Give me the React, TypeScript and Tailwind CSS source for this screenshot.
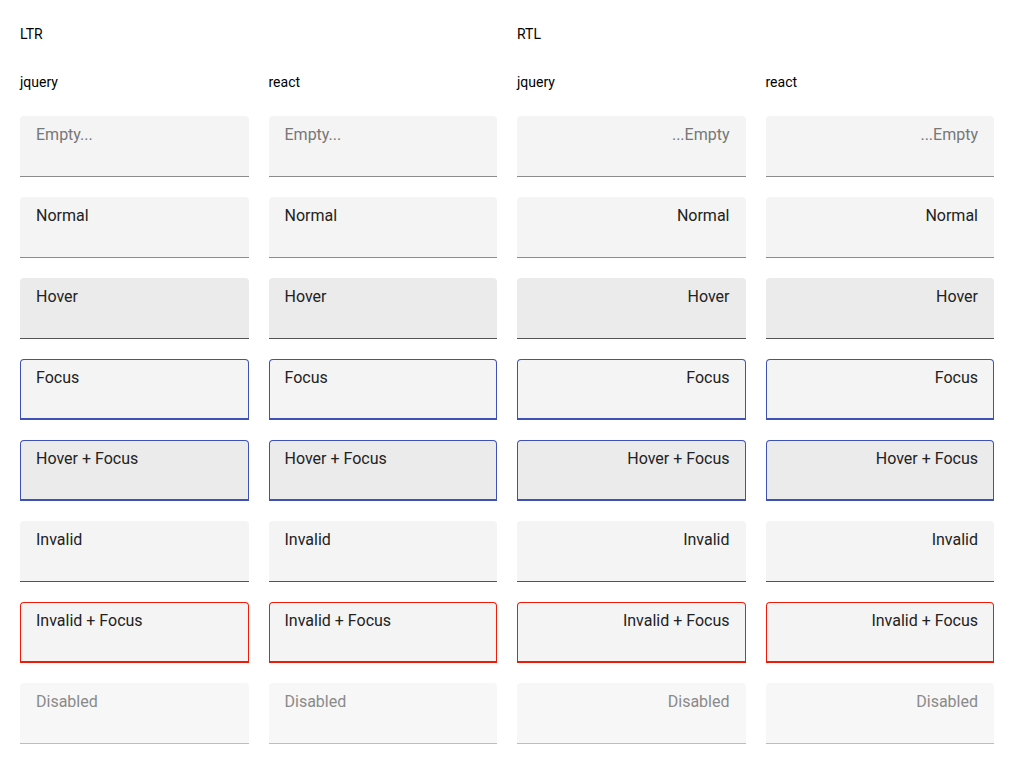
import React from "react";

type Variant = "empty" | "normal" | "hover" | "focus" | "hoverFocus" | "invalid" | "invalidFocus" | "disabled";

const rows: { variant: Variant; text: string }[] = [
  { variant: "empty", text: "" },
  { variant: "normal", text: "Normal" },
  { variant: "hover", text: "Hover" },
  { variant: "focus", text: "Focus" },
  { variant: "hoverFocus", text: "Hover + Focus" },
  { variant: "invalid", text: "Invalid" },
  { variant: "invalidFocus", text: "Invalid + Focus" },
  { variant: "disabled", text: "Disabled" },
];

// padding lives here so the focused (bordered) states don't fight the base
const variantClass: Record<Variant, string> = {
  empty: "bg-[#f4f4f4] border-b border-[#8c8c8c] px-4 pt-[9px] text-[#222]",
  normal: "bg-[#f4f4f4] border-b border-[#8c8c8c] px-4 pt-[9px] text-[#222]",
  hover: "bg-[#ebebeb] border-b border-[#545454] px-4 pt-[9px] text-[#222]",
  focus: "bg-[#f4f4f4] border border-b-2 border-[#3f51b5] px-[15px] pt-[8px] text-[#222]",
  hoverFocus: "bg-[#ebebeb] border border-b-2 border-[#3f51b5] px-[15px] pt-[8px] text-[#222]",
  invalid: "bg-[#f4f4f4] border-b border-[#545454] px-4 pt-[9px] text-[#222]",
  invalidFocus: "bg-[#f4f4f4] border border-b-2 border-[#f01a06] px-[15px] pt-[8px] text-[#222]",
  disabled: "bg-[#f7f7f7] border-b border-[#bdbdbd] px-4 pt-[9px] text-[#8a8a8a]",
};

function Field({ variant, text, rtl }: { variant: Variant; text: string; rtl: boolean }) {
  return (
    <textarea
      dir={rtl ? "rtl" : "ltr"}
      readOnly
      disabled={variant === "disabled"}
      value={text}
      placeholder="Empty..."
      className={`block w-full h-[61px] resize-none rounded-t-[4px] text-[16px] leading-5 placeholder:text-[#777] outline-none overflow-hidden ${variantClass[variant]}`}
    />
  );
}

function Half({ title, rtl }: { title: string; rtl: boolean }) {
  return (
    <div className="flex-1 min-w-0">
      <div className="text-[14px] leading-4 h-4">{title}</div>
      <div className="mt-8 grid grid-cols-2 gap-x-5">
        <div className="text-[14px] leading-4">jquery</div>
        <div className="text-[14px] leading-4">react</div>
      </div>
      <div className="mt-[26px] grid grid-cols-2 gap-x-5 gap-y-5">
        {rows.map((r) => (
          <React.Fragment key={r.variant}>
            <Field variant={r.variant} text={r.text} rtl={rtl} />
            <Field variant={r.variant} text={r.text} rtl={rtl} />
          </React.Fragment>
        ))}
      </div>
    </div>
  );
}

export default function App() {
  return (
    <div className="min-h-screen bg-white text-black font-['Roboto',sans-serif] pt-[26px] pl-5">
      <div className="flex gap-5 w-[974px]">
        <Half title="LTR" rtl={false} />
        <Half title="RTL" rtl={true} />
      </div>
    </div>
  );
}
